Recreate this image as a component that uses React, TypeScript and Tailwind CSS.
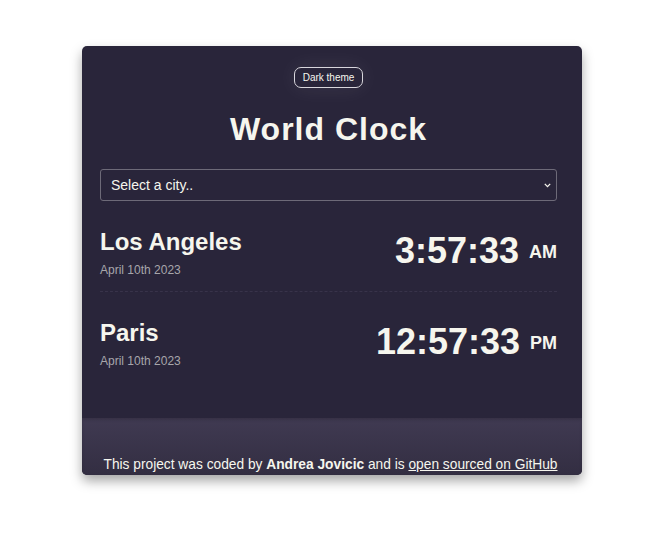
import React from 'react';

type City = { name: string; date: string; time: string; period: string };

const cities: City[] = [
  { name: 'Los Angeles', date: 'April 10th 2023', time: '3:57:33', period: 'AM' },
  { name: 'Paris', date: 'April 10th 2023', time: '12:57:33', period: 'PM' },
];

const CityRow: React.FC<{ city: City; first?: boolean }> = ({ city, first }) => (
  <div
    className={`flex items-center justify-between pt-[27px] pb-[14px] ${
      first ? '' : 'border-t border-dashed border-[#38334a]'
    }`}
  >
    <div>
      <h2 className="text-[24px] font-bold leading-[29px] mt-[-1px]">{city.name}</h2>
      <div className="text-[12px] leading-[14px] text-[#a7a6ab] mt-[7px]">{city.date}</div>
    </div>
    <div className="flex items-center">
      <span className="text-[36px] font-bold leading-[43px] mt-[-5px]">{city.time}</span>
      <span className="text-[18px] font-bold ml-[10px]">{city.period}</span>
    </div>
  </div>
);

export default function App() {
  return (
    <div className="min-h-screen bg-white pt-[46px] pl-[8px]" style={{ fontFamily: '"Liberation Sans", Arial, sans-serif' }}>
      <div className="mx-auto w-[500px] rounded-[5px] overflow-hidden bg-[#29253a] text-[#f6f6ee] shadow-[0_6px_12px_rgba(0,0,0,0.35)]">
        <div className="pl-[18px] pr-[25px] pt-[21px] pb-[36px]">
          <div className="flex justify-center">
            <button className="h-[21px] px-[8px] rounded-[7px] border border-[#d8d6dc] text-[10px] leading-none text-[#f6f6ee] shadow-[0_0_22px_rgba(255,255,255,0.08)]">
              Dark theme
            </button>
          </div>
          <h1 className="mt-[22px] text-center text-[32px] font-bold leading-[38px] tracking-[1px]">World Clock</h1>
          <div className="relative mt-[21px]">
            <select className="w-full h-[32px] appearance-none rounded-[3px] border border-[#6d6a78] bg-transparent pl-[10px] text-[14px] text-[#f6f6ee] outline-none">
              <option>Select a city..</option>
            </select>
            <svg
              className="pointer-events-none absolute right-[6px] top-[14px]"
              width="7"
              height="5"
              viewBox="0 0 7 5"
              fill="none"
              stroke="#f6f6ee"
              strokeWidth="1.3"
            >
              <path d="M0.8 0.9 L3.5 3.6 L6.2 0.9" />
            </svg>
          </div>
          {cities.map((c, i) => (
            <CityRow key={c.name} city={c} first={i === 0} />
          ))}
        </div>
        <div className="bg-gradient-to-b from-[#403a52] to-[#332e42] shadow-[inset_0_2px_3px_rgba(0,0,0,0.15)] pl-[2px] pr-[5px] pt-[38px] pb-[2px] text-center text-[13.75px] leading-[17px]">
          This project was coded by <strong>Andrea Jovicic</strong> and is{' '}
          <a href="#" className="underline">open sourced on GitHub</a>
        </div>
      </div>
    </div>
  );
}
